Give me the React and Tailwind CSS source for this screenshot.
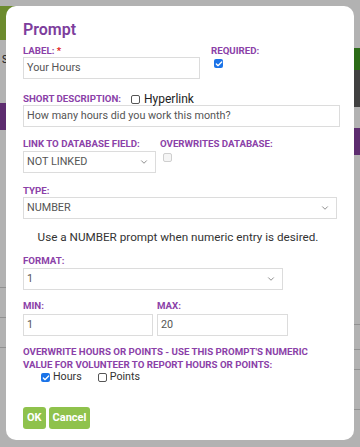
import { ChevronDown, Check } from "lucide-react";

const LABEL = "block text-[9.7px] leading-[12px] font-bold uppercase text-[#8b41a8]";
const INPUT = "h-[22px] border border-[#dcdcdc] bg-white px-[3px] text-[10.8px] text-[#555] flex items-center";

function Box({ checked, disabled }) {
  if (checked) {
    return (
      <span className="w-[9px] h-[9px] rounded-[2px] bg-[#1a73e8] flex items-center justify-center shrink-0">
        <Check size={8} strokeWidth={4} className="text-white" />
      </span>
    );
  }
  return (
    <span
      className={
        disabled
          ? "block w-[9px] h-[9px] rounded-[2px] border border-[#cfcfcf] bg-[#f5f5f5] shrink-0"
          : "block w-[9px] h-[9px] rounded-[2px] border border-[#555] bg-white shrink-0"
      }
    />
  );
}

function Select({ value, className }) {
  return (
    <div className={`${INPUT} justify-between pr-[6px] ${className}`}>
      <span>{value}</span>
      <ChevronDown size={10} strokeWidth={2} className="text-[#777]" />
    </div>
  );
}

export default function App() {
  return (
    <div className="relative w-[360px] h-[447px] overflow-hidden bg-white font-['Roboto','Liberation_Sans',sans-serif]">
      {/* page behind the dialog */}
      <div className="flex h-full">
        <div className="w-[180px] flex flex-col">
          <div className="h-[6px]" />
          <div className="h-[34px] bg-[#9bc843]" />
          <div className="h-[63px] pl-[2px] pt-[12px] text-[10px] text-[#222]">S</div>
          <div className="h-[27px] bg-[#86409f]" />
          <div className="h-[130px]" />
          <div className="h-[28px] border-b border-[#d0d0d0]" />
          <div className="h-[30px] border-b border-[#d0d0d0]" />
          <div className="h-[30px] border-b border-[#d0d0d0]" />
        </div>
        <div className="w-[180px] flex flex-col">
          <div className="h-[48px]" />
          <div className="h-[22px] bg-[#3e9a22]" />
          <div className="h-[37px] bg-[#5d5d5d]" />
          <div className="h-[21px]" />
          <div className="h-[27px] bg-[#86409f]" />
          <div className="h-[135px]" />
          <div className="h-[35px] border-b border-[#d0d0d0]" />
          <div className="h-[25px] border-b border-[#d0d0d0]" />
          <div className="h-[20px] border-b border-[#d0d0d0]" />
          <div className="h-[40px] border-b border-[#d0d0d0]" />
        </div>
      </div>

      {/* overlay */}
      <div className="absolute inset-0 bg-black/30" />

      {/* dialog */}
      <div className="absolute left-[6px] top-[6px] w-[348px] h-[434px] rounded-[10px] bg-white pl-[17px] pt-[12px]">
        <h2 className="text-[16px] leading-[24px] font-semibold text-[#7d3d9c]">Prompt</h2>

        <div className="mt-[3px] flex">
          <div className="w-[188px]">
            <label className={LABEL}>
              Label: <span className="text-[#e02020]">*</span>
            </label>
            <div className={`${INPUT} w-[177px]`}>Your Hours</div>
          </div>
          <div>
            <label className={LABEL}>Required:</label>
            <div className="mt-[2px] pl-[3px]">
              <Box checked />
            </div>
          </div>
        </div>

        <div className="mt-[14px] h-[12px] flex items-center">
          <label className={LABEL}>Short Description:</label>
          <span className="ml-[10px] flex items-center gap-[4px] text-[12px] leading-[12px] text-[#222]">
            <Box />
            Hyperlink
          </span>
        </div>
        <div className={`${INPUT} w-[317px]`}>How many hours did you work this month?</div>

        <div className="mt-[11px] flex">
          <div className="w-[137px]">
            <label className={LABEL}>Link to database field:</label>
            <Select value="NOT LINKED" className="mt-px w-[133px]" />
          </div>
          <div>
            <label className={LABEL}>Overwrites database:</label>
            <div className="mt-[3px] pl-[3px]">
              <Box disabled />
            </div>
          </div>
        </div>

        <label className={`${LABEL} mt-[12px]`}>Type:</label>
        <Select value="NUMBER" className="w-[314px]" />

        <p className="mt-[10px] w-[310px] whitespace-nowrap text-center text-[11.7px] leading-[16px] text-[#333]">
          Use a NUMBER prompt when numeric entry is desired.
        </p>

        <label className={`${LABEL} mt-[10px]`}>Format:</label>
        <Select value="1" className="mt-px w-[260px]" />

        <div className="mt-[10px] flex gap-[4px]">
          <div>
            <label className={LABEL}>Min:</label>
            <div className={`${INPUT} mt-[2px] w-[130px]`}>1</div>
          </div>
          <div>
            <label className={LABEL}>Max:</label>
            <div className={`${INPUT} mt-[2px] w-[131px]`}>20</div>
          </div>
        </div>

        <p className="mt-[9px] text-[9.7px] leading-[13px] font-bold uppercase text-[#8b41a8]">
          Overwrite hours or points - use this prompt's numeric
          <br />
          value for volunteer to report hours or points:
        </p>
        <div className="pl-[18px] flex items-center h-[13px] text-[10.7px] text-[#333]">
          <span className="flex items-center gap-[3px]">
            <Box checked />
            Hours
          </span>
          <span className="ml-[16px] flex items-center gap-[3px]">
            <Box />
            Points
          </span>
        </div>

        <div className="mt-[23px] flex gap-[3px]">
          <button className="h-[22px] px-[4px] rounded-[3px] bg-[#8fc24c] text-white text-[11px] font-bold">
            OK
          </button>
          <button className="h-[22px] px-[4px] rounded-[3px] bg-[#8fc24c] text-white text-[11px] font-bold">
            Cancel
          </button>
        </div>
      </div>
    </div>
  );
}
